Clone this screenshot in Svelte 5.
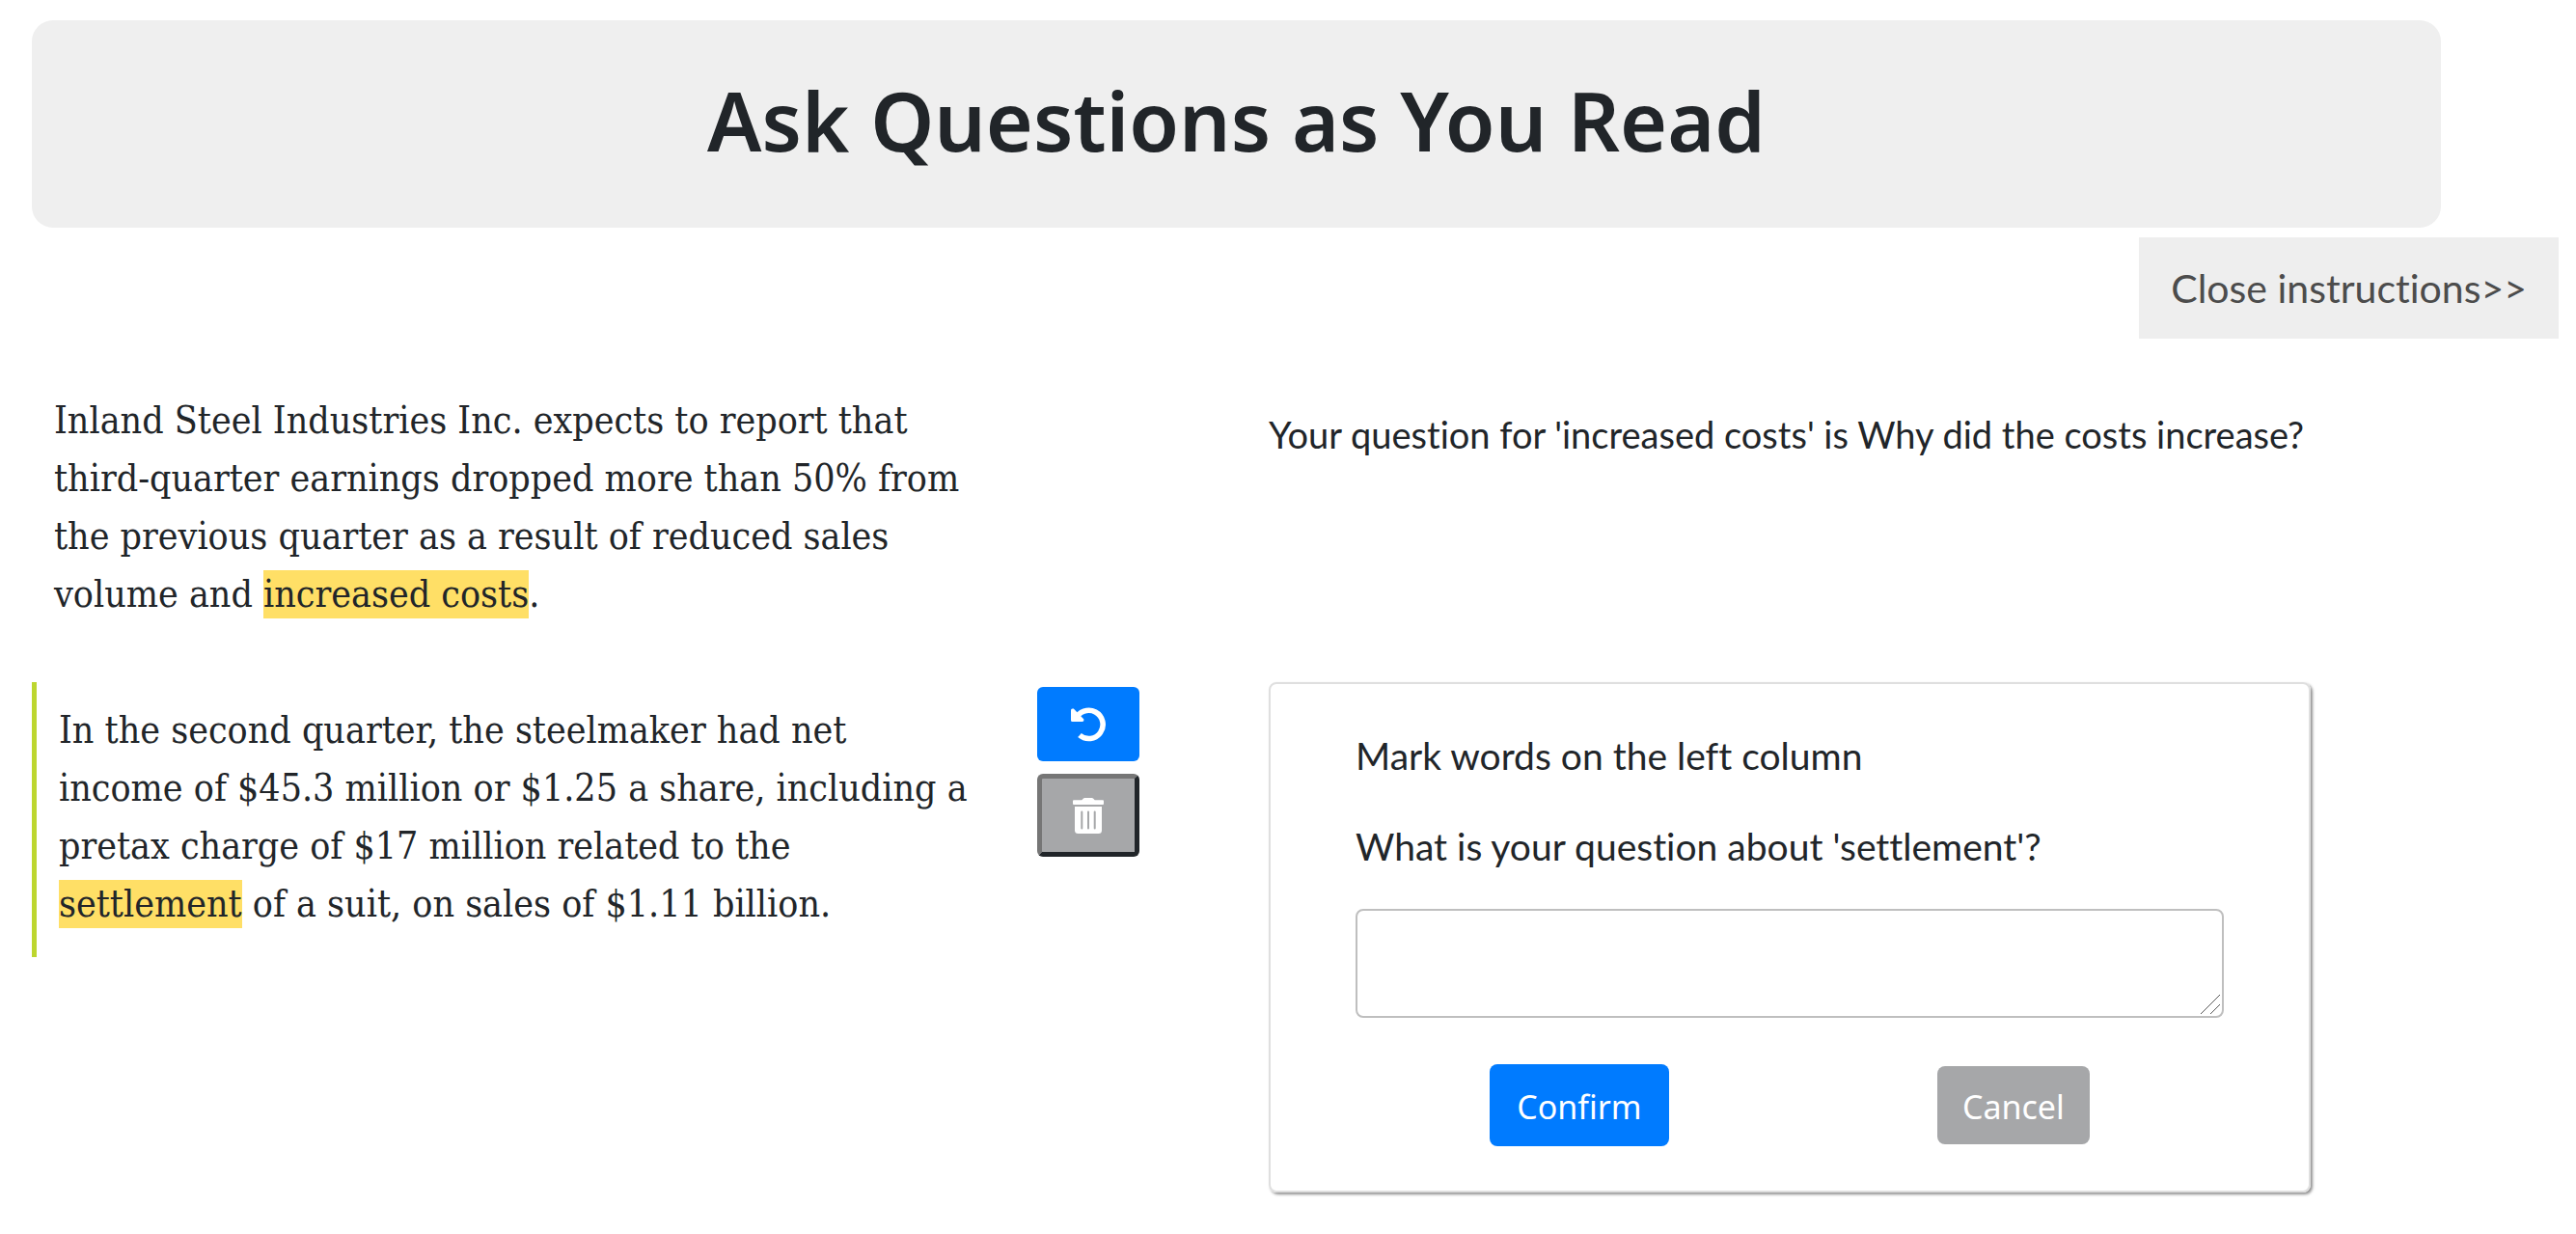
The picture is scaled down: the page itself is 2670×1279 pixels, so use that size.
<script>
  let question = $state('');
</script>

<header class="banner">
  <h1>Ask Questions as You Read</h1>
</header>

<div class="toolbar">
  <button class="toggle" type="button">Close instructions&gt;&gt;</button>
</div>

<main>
  <section class="row">
    <p class="passage">
      Inland Steel Industries Inc. expects to report that<br />
      third-quarter earnings dropped more than 50% from<br />
      the previous quarter as a result of reduced sales<br />
      volume and <mark>increased costs</mark>.
    </p>
    <p class="answer">Your question for 'increased costs' is Why did the costs increase?</p>
  </section>

  <section class="row">
    <p class="passage active">
      In the second quarter, the steelmaker had net<br />
      income of $45.3 million or $1.25 a share, including a<br />
      pretax charge of $17 million related to the<br />
      <mark>settlement</mark> of a suit, on sales of $1.11 billion.
    </p>
    <div class="tools">
      <button class="tool undo" type="button" aria-label="Undo">
        <svg viewBox="0 0 36 36" width="36" height="36" aria-hidden="true">
          <path d="M5 12.5A14.6 14.6 0 1 1 9 29" fill="none" stroke="#fff" stroke-width="5.6" />
          <path d="M0 3.2Q0 1.5 1.6 1.5H2.8L13.4 12.6Q13.8 15 12 15H1.5Q0 15 0 13.5Z" fill="#fff" />
        </svg>
      </button>
      <button class="tool trash" type="button" aria-label="Delete">
        <svg viewBox="0 0 32 37" width="32" height="37" aria-hidden="true">
          <path d="M1 2.3H9.3L11 .5Q11.5 0 12.2 0H19.8Q20.5 0 21 .5L22.7 2.3H31Q32 2.3 32 3.3V6Q32 7 31 7H1Q0 7 0 6V3.3Q0 2.3 1 2.3Z" fill="#fff" />
          <path d="M2 9H30V33.5Q30 37 26.5 37H5.5Q2 37 2 33.5Z" fill="#fff" />
          <path d="M9.3 14.5V31.5M16 14.5V31.5M22.7 14.5V31.5" stroke="#a6a7a9" stroke-width="2" stroke-linecap="round" />
        </svg>
      </button>
    </div>
    <form class="card" onsubmit={(e) => e.preventDefault()}>
      <p>Mark words on the left column</p>
      <label for="question">What is your question about 'settlement'?</label>
      <div class="field">
        <textarea id="question" bind:value={question}></textarea>
        <svg class="grip" viewBox="0 0 20 20" width="20" height="20" aria-hidden="true">
          <path d="M0 20L20 0M10 20L20 10" stroke="#555" stroke-width="1" />
        </svg>
      </div>
      <div class="actions">
        <button class="confirm" type="submit">Confirm</button>
        <button class="cancel" type="button">Cancel</button>
      </div>
    </form>
  </section>
</main>

<style>
  :global(body) {
    margin: 0;
    background: #fff;
    color: #212529;
    font-family: Lato, sans-serif;
    font-size: 40px;
    font-variant-ligatures: none;
    line-height: 60px;
  }

  .banner {
    margin: 21px 140px 0 33px;
    padding: 50px 24px 58px;
    border-radius: 22px;
    background: #efefef;
    text-align: center;
  }

  h1 {
    margin: 0;
    font-family: 'Noto Sans', 'Open Sans', sans-serif;
    font-size: 84px;
    font-weight: 600;
    line-height: 107px;
  }

  .toolbar {
    display: flex;
    justify-content: flex-end;
    padding: 10px 18px 0 33px;
  }

  button {
    border: 0;
    font-variant-ligatures: inherit;
  }

  .toggle {
    padding: 23px 33px 22px;
    background: #eee;
    color: #4c4c4c;
    font-family: inherit;
    font-size: 41px;
    line-height: 60px;
  }

  main {
    display: grid;
    gap: 36px;
    margin: 35px 140px 40px 33px;
  }

  .row {
    display: grid;
    grid-template-columns: minmax(0, 1042fr) minmax(0, 240fr) minmax(0, 1080fr) minmax(0, 135fr);
    align-items: start;
  }

  .passage {
    box-sizing: border-box;
    margin: 0;
    padding: 20px 16px 25px 23px;
    font-family: 'DejaVu Serif Condensed', 'DejaVu Serif', serif;
    font-size: 39px;
  }

  .active {
    border-left: 5px solid #bdd62f;
  }

  mark {
    padding: 2px 0 3px;
    background: #ffdf66;
    color: inherit;
  }

  .answer {
    grid-column: 3;
    margin: 34px 0 0;
    font-size: 38px;
    white-space: nowrap;
  }

  .tools {
    display: flex;
    flex-direction: column;
    align-items: flex-start;
    gap: 13px;
    padding-top: 5px;
  }

  .tool {
    display: flex;
    align-items: center;
    justify-content: center;
    box-sizing: border-box;
    width: 106px;
    height: 77px;
    padding: 0;
    border-radius: 6px;
  }

  .undo {
    background: #007bff;
  }

  .trash {
    height: 86px;
    border: 5px solid;
    border-color: #767676 #212529 #212529 #767676;
    background: #a6a7a9;
  }

  .card {
    display: flex;
    flex-direction: column;
    padding: 44px 88px 46px;
    border: 2px solid #dfdfdf;
    border-radius: 8px;
    box-shadow: 2px 2px 3px #909090;
    font-size: 39px;
  }

  .card p {
    margin: 0 0 34px;
  }

  .field {
    position: relative;
    display: flex;
    margin: 35px 0 48px;
  }

  textarea {
    box-sizing: border-box;
    width: 100%;
    height: 113px;
    margin: 0;
    padding: 10px 20px;
    border: 2px solid #bfbfbf;
    border-radius: 8px;
    background: #fff;
    color: inherit;
    font: inherit;
    resize: none;
  }

  .grip {
    position: absolute;
    right: 4px;
    bottom: 4px;
    pointer-events: none;
  }

  .actions {
    display: flex;
    align-items: center;
    justify-content: space-around;
  }

  .actions button {
    border-radius: 8px;
    color: #fff;
    font-family: 'Noto Sans', 'Open Sans', sans-serif;
    font-size: 34px;
    line-height: 53px;
  }

  .actions .confirm {
    padding: 18px 28px 14px;
    background: #007bff;
  }

  .actions .cancel {
    padding: 16px 26px 12px;
    background: #a6a7a9;
  }
</style>
